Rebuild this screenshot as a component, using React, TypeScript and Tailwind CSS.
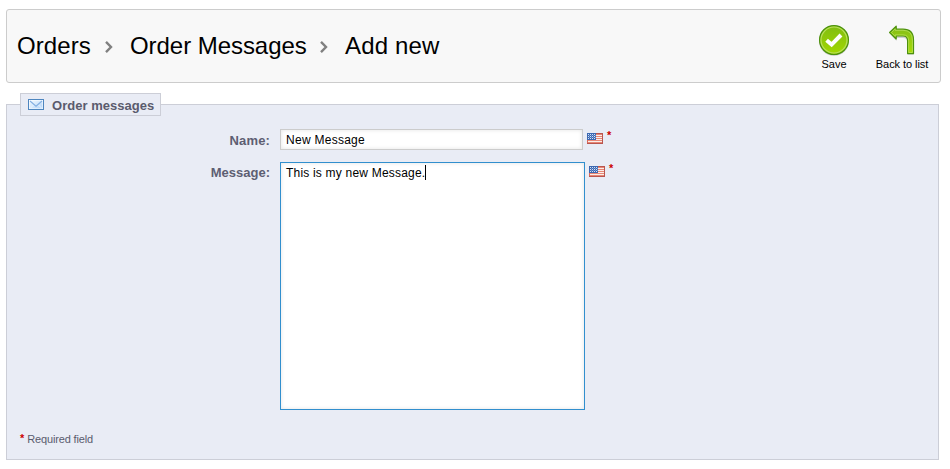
import React from "react";

function Chevron() {
  return (
    <svg width="8" height="13" viewBox="0 0 8 13" className="mt-[2px] shrink-0">
      <path d="M1 0.9L6 6L1 11.1" fill="none" stroke="#808080" strokeWidth="2.4" />
    </svg>
  );
}

function SaveIcon() {
  return (
    <svg width="32" height="32" viewBox="0 0 32 32">
      <defs>
        <linearGradient id="save" x1="0" y1="0" x2="0" y2="1">
          <stop offset="0" stopColor="#80bd12" />
          <stop offset="1" stopColor="#a2d800" />
        </linearGradient>
      </defs>
      <circle cx="16" cy="17" r="15" fill="#000" opacity="0.18" />
      <circle cx="16" cy="16" r="14.4" fill="url(#save)" stroke="#4d920d" strokeWidth="1.3" />
      <circle cx="16" cy="16" r="13" fill="none" stroke="#b9df5c" strokeWidth="1.2" />
      <path d="M8.6 16.2L13.6 20.6L23 11" fill="none" stroke="#fff" strokeWidth="4" />
    </svg>
  );
}

function BackIcon() {
  return (
    <svg width="32" height="32" viewBox="0 0 32 32">
      <defs>
        <linearGradient id="back" x1="0" y1="0" x2="0" y2="1">
          <stop offset="0" stopColor="#83bd1a" />
          <stop offset="1" stopColor="#a6dc00" />
        </linearGradient>
      </defs>
      <path d="M4 9.5L10.5 3V6H17Q28 6 28 16.5V30.5H21.5V18Q21.5 14 17 14H10.5V17Z" fill="#000" opacity="0.17" />
      <path
        d="M3.6 8.5L10.2 2.2V5.2H17Q27.5 5.2 27.5 16V29.6H21.6V17Q21.6 12 17 12H10.2V15Z"
        fill="url(#back)"
        stroke="#4d920d"
        strokeWidth="1.2"
        strokeLinejoin="round"
      />
      <path d="M5.4 8.5L9.2 4.8V6.3H17Q26.4 6.3 26.4 16V28.5H22.7V17Q22.7 10.9 17 10.9H9.2V12.4Z" fill="none" stroke="#b9df5c" strokeWidth="0.8" />
    </svg>
  );
}

function Envelope() {
  return (
    <svg width="16" height="11" viewBox="0 0 16 11" className="shrink-0">
      <defs>
        <linearGradient id="mail" x1="0" y1="0" x2="1" y2="1">
          <stop offset="0" stopColor="#f4faff" />
          <stop offset="1" stopColor="#b3d4f8" />
        </linearGradient>
      </defs>
      <rect x="0.5" y="0.5" width="15" height="10" fill="#fff" stroke="#4e86bf" />
      <rect x="1.5" y="1.5" width="13" height="8" fill="url(#mail)" />
      <path d="M2 9.5L6 5.5M14 9.5L10 5.5" stroke="#e9f4ff" />
      <path d="M2 2L8 7.2L14 2" fill="none" stroke="#84b0e2" strokeWidth="1.1" />
    </svg>
  );
}

function Flag() {
  return (
    <svg width="16" height="11" viewBox="0 0 16 11" className="shrink-0" shapeRendering="crispEdges">
      <rect width="16" height="11" fill="#d9685a" />
      <path d="M1 2.5H15M1 4.5H15M1 6.5H15M1 8.5H15" stroke="#faeee9" />
      <path d="M1 1.5H15M1 3.5H15M1 5.5H15M1 7.5H15M1 9.5H15" stroke="#e88776" />
      <rect width="9" height="7" fill="#3c68b1" />
      <path d="M1 1.5H9M1 3.5H9M1 5.5H9" stroke="#d3e1f5" strokeDasharray="1 1" />
      <path d="M2 2.5H9M2 4.5H9" stroke="#6f93cd" strokeDasharray="1 1" />
      <path d="M9 0.5H16M0 10.5H16M15.5 1V10" stroke="#b8564f" />
    </svg>
  );
}

export default function App() {
  return (
    <div className="h-[469px] w-[950px] overflow-hidden bg-white pt-[9px] pl-[6px] font-['Liberation_Sans',Arial,sans-serif] text-black">
      <header className="flex h-[74px] w-[935px] justify-between rounded-[3px] border border-[#cccccc] bg-[#f8f8f8] pr-[12px] pl-[10px]">
        <h1 className="flex h-[72px] items-center text-[24px] leading-[30px] whitespace-nowrap">
          <span className="w-[88px] tracking-[0.1px]">Orders</span>
          <Chevron />
          <span className="ml-[17px] w-[190px] tracking-[-0.05px]">Order Messages</span>
          <Chevron />
          <span className="ml-[17px] tracking-[0.15px]">Add new</span>
        </h1>
        <nav className="flex pt-[14px] text-[11px] leading-[14px] whitespace-nowrap">
          <a className="flex w-[46px] flex-col items-center">
            <SaveIcon />
            <span className="mt-[1px]">Save</span>
          </a>
          <a className="ml-[18px] flex w-[53px] flex-col items-center">
            <BackIcon />
            <span className="mt-[1px] ml-px tracking-[-0.07px]">Back to list</span>
          </a>
        </nav>
      </header>

      <main className="mt-[21px] h-[356px] w-[933px] border border-[#ccced7] bg-[#e9ecf5] pl-[13px]">
        <div className="-mt-[12px] flex h-[23px] w-[141px] items-center border border-[#ccced7] bg-[#e9ecf5] pl-[7px] text-[13px] font-bold tracking-[0.03px] whitespace-nowrap text-[#5a5b6d]">
          <Envelope />
          <span className="mt-[2px] ml-[8px]">Order messages</span>
        </div>

        <div className="mt-[13px] flex">
          <label className="w-[250px] text-right text-[13px] leading-[23px] font-bold tracking-[0.15px] text-[#5d5e72]">Name:</label>
          <div className="ml-[10px] h-[21px] w-[303px] border border-[#cccccc] bg-white pl-[5px] text-[12px] leading-[20px] tracking-[0.27px] shadow-[inset_0_0_4px_#e4e4e4]">
            New Message
          </div>
          <div className="ml-[4px] flex pt-[4px]">
            <Flag />
            <sup className="top-0 ml-[4px] -mt-[3px] text-[11px] leading-[10px] font-bold text-[#cc0000]">*</sup>
          </div>
        </div>

        <div className="mt-[10px] flex">
          <label className="w-[250px] text-right text-[13px] leading-[21px] font-bold text-[#5d5e72]">Message:</label>
          <div className="ml-[10px] flex h-[248px] w-[305px] items-start border border-[#318fce] bg-white pt-[2px] pl-[5px] text-[12px] leading-[16px] tracking-[0.2px] shadow-[inset_0_0_4px_#e4e4e4]">
            <span>This is my new Message.</span>
            <span className="h-[15px] w-px bg-black" />
          </div>
          <div className="ml-[4px] flex pt-[4px]">
            <Flag />
            <sup className="top-0 ml-[4px] -mt-[3px] text-[11px] leading-[10px] font-bold text-[#cc0000]">*</sup>
          </div>
        </div>

        <p className="mt-[21px] flex text-[11px] leading-[16px] tracking-[-0.14px] text-[#5a5b6d]">
          <sup className="top-0 mr-[3px] text-[11px] leading-[15px] font-bold text-[#cc0000]">*</sup>
          Required field
        </p>
      </main>
    </div>
  );
}
